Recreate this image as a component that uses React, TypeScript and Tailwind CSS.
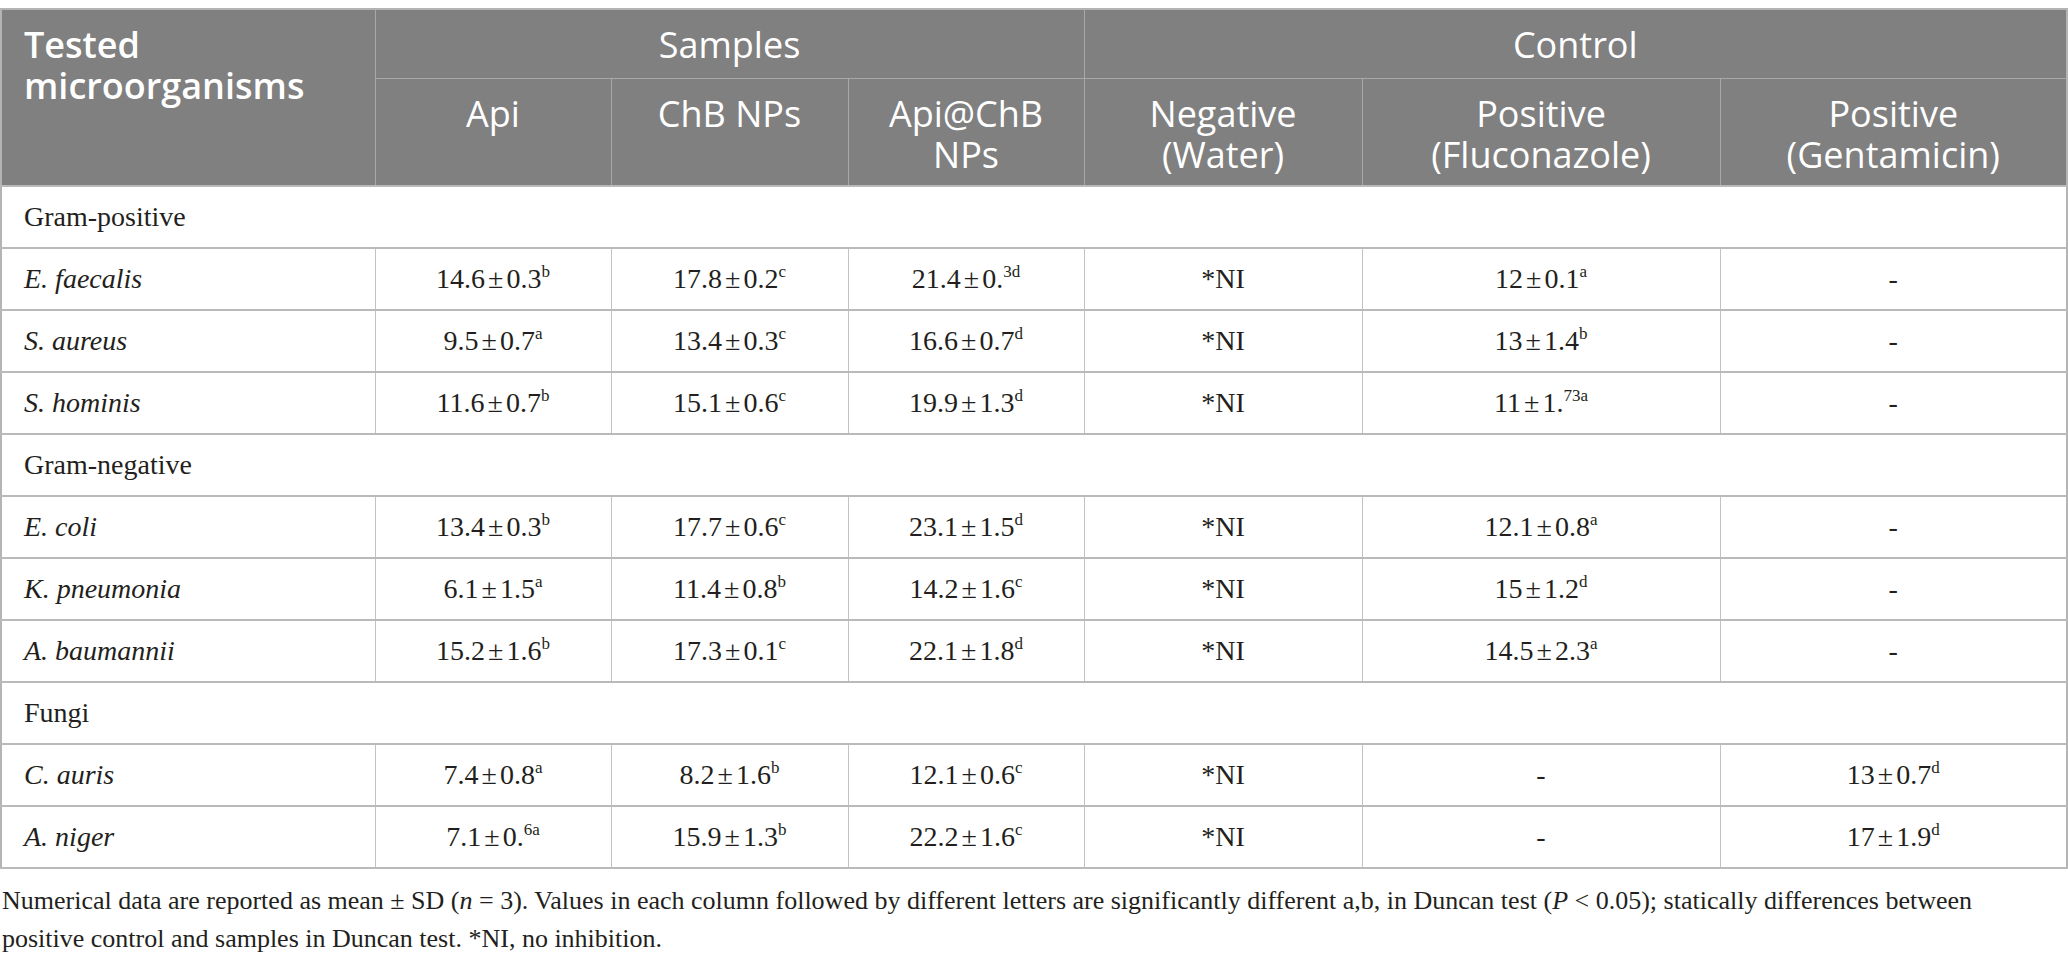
import React from 'react';

type Row = { name: string; cells: string[] };
type Group = { title: string; rows: Row[] };

const groups: Group[] = [
  {
    title: 'Gram-positive',
    rows: [
      { name: 'E. faecalis', cells: ['14.6|0.3|b', '17.8|0.2|c', '21.4|0.|3d', '*NI', '12|0.1|a', '-'] },
      { name: 'S. aureus', cells: ['9.5|0.7|a', '13.4|0.3|c', '16.6|0.7|d', '*NI', '13|1.4|b', '-'] },
      { name: 'S. hominis', cells: ['11.6|0.7|b', '15.1|0.6|c', '19.9|1.3|d', '*NI', '11|1.|73a', '-'] },
    ],
  },
  {
    title: 'Gram-negative',
    rows: [
      { name: 'E. coli', cells: ['13.4|0.3|b', '17.7|0.6|c', '23.1|1.5|d', '*NI', '12.1|0.8|a', '-'] },
      { name: 'K. pneumonia', cells: ['6.1|1.5|a', '11.4|0.8|b', '14.2|1.6|c', '*NI', '15|1.2|d', '-'] },
      { name: 'A. baumannii', cells: ['15.2|1.6|b', '17.3|0.1|c', '22.1|1.8|d', '*NI', '14.5|2.3|a', '-'] },
    ],
  },
  {
    title: 'Fungi',
    rows: [
      { name: 'C. auris', cells: ['7.4|0.8|a', '8.2|1.6|b', '12.1|0.6|c', '*NI', '-', '13|0.7|d'] },
      { name: 'A. niger', cells: ['7.1|0.|6a', '15.9|1.3|b', '22.2|1.6|c', '*NI', '-', '17|1.9|d'] },
    ],
  },
];

function Value({ v }: { v: string }) {
  if (!v.includes('|')) return <>{v}</>;
  const [mean, sd, sup] = v.split('|');
  return (
    <>
      {mean}
      <span className="mx-[3px]">±</span>
      {sd}
      <sup className="text-[17px] -top-[11px]">{sup}</sup>
    </>
  );
}

export default function App() {
  const th = 'border border-[#a8a8a8] bg-[#808080] px-2 pt-[14px] align-top font-normal text-white';
  const td = 'border-x border-y-2 border-x-[#c2c2c2] border-y-[#bababa] h-[62px] align-middle';

  return (
    <div className="min-h-screen bg-white pt-[8px] text-[#231f20] font-['Liberation_Serif',serif]">
      <table className="w-full table-fixed border-collapse border-2 border-[#b4b4b4] text-[28px]">
        <colgroup>
          <col className="w-[374px]" />
          <col className="w-[236px]" />
          <col className="w-[237px]" />
          <col className="w-[236px]" />
          <col className="w-[278px]" />
          <col className="w-[358px]" />
          <col />
        </colgroup>
        <thead className="font-['Open_Sans',sans-serif] text-[36px] leading-[41px]">
          <tr className="h-[69px]">
            <th rowSpan={2} className={`${th} pl-[22px] text-left font-semibold`}>
              Tested
              <br />
              microorganisms
            </th>
            <th colSpan={3} className={th}>Samples</th>
            <th colSpan={3} className={th}>Control</th>
          </tr>
          <tr className="h-[108px]">
            <th className={th}>Api</th>
            <th className={th}>ChB NPs</th>
            <th className={th}>
              Api@ChB
              <br />
              NPs
            </th>
            <th className={th}>
              Negative
              <br />
              (Water)
            </th>
            <th className={th}>
              Positive
              <br />
              (Fluconazole)
            </th>
            <th className={th}>
              Positive
              <br />
              (Gentamicin)
            </th>
          </tr>
        </thead>
        <tbody>
          {groups.map((g) => (
            <React.Fragment key={g.title}>
              <tr>
                <td colSpan={7} className={`${td} pl-[22px] text-left`}>
                  {g.title}
                </td>
              </tr>
              {g.rows.map((r) => (
                <tr key={r.name}>
                  <td className={`${td} pl-[22px] text-left italic`}>{r.name}</td>
                  {r.cells.map((c, i) => (
                    <td key={i} className={`${td} text-center`}>
                      <Value v={c} />
                    </td>
                  ))}
                </tr>
              ))}
            </React.Fragment>
          ))}
        </tbody>
      </table>
      <p className="whitespace-nowrap pl-[2px] pt-[13px] text-[26px] leading-[38px]">
        Numerical data are reported as mean ± SD (<i>n</i> = 3). Values in each column followed by different letters are
        significantly different a,b, in Duncan test (<i>P</i> &lt; 0.05); statically differences between
        <br />
        positive control and samples in Duncan test. *NI, no inhibition.
      </p>
    </div>
  );
}
